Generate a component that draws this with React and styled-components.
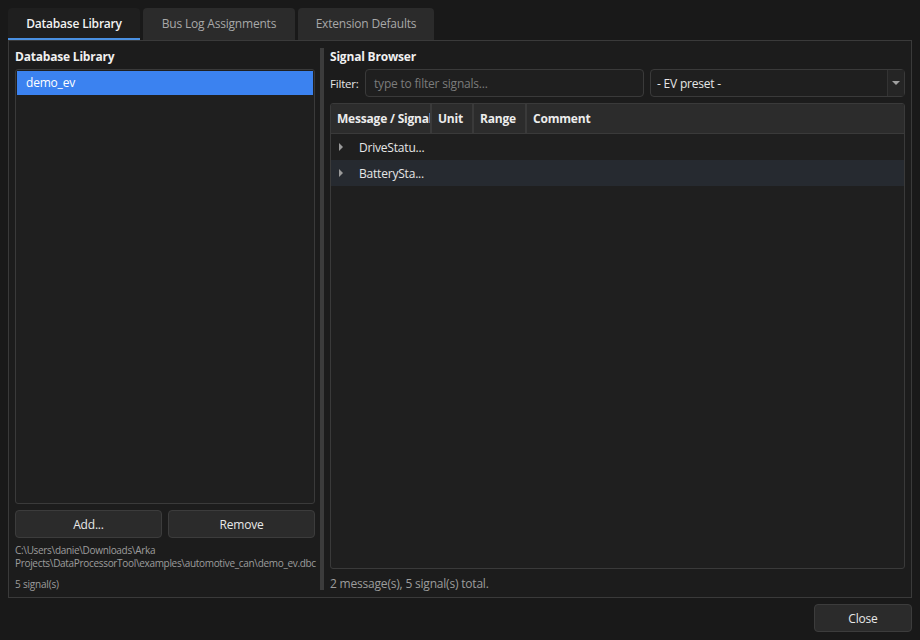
import React from 'react';
import styled, { createGlobalStyle } from 'styled-components';

const Global = createGlobalStyle`
  html, body { margin: 0; padding: 0; background: #191919; }
  body {
    font-family: "Open Sans", "Noto Sans", sans-serif;
    font-size: 12px;
    letter-spacing: -0.2px;
    color: #e6e6e6;
  }
`;

const Window = styled.div`
  width: 920px;
  height: 640px;
  box-sizing: border-box;
  padding: 8px;
  display: flex;
  flex-direction: column;
  background: #191919;
`;

const TabBar = styled.div`
  display: flex;
  gap: 3px;
  height: 32px;
`;

const Tab = styled.div`
  display: flex;
  align-items: center;
  justify-content: center;
  white-space: nowrap;
  border-radius: 4px 4px 0 0;
  background: ${p => (p.$active ? '#1f1f1f' : '#2b2b2b')};
  color: ${p => (p.$active ? '#f2f2f2' : '#a8a8a8')};
  font-weight: ${p => (p.$active ? 600 : 400)};
  border-bottom: 2px solid ${p => (p.$active ? '#4a90e2' : 'transparent')};
  box-sizing: border-box;
  width: ${p => p.$w}px;
`;

const Pane = styled.div`
  height: 558px;
  border: 1px solid #3a3a3a;
  background: #1c1c1c;
  box-sizing: border-box;
  display: flex;
  padding: 6px;
  gap: 5px;
`;

const LeftCol = styled.div`
  width: 300px;
  display: flex;
  flex-direction: column;
`;

const RightCol = styled.div`
  flex: 1;
  display: flex;
  flex-direction: column;
`;

const Splitter = styled.div`
  width: 4px;
  background: #3c3c3c;
  margin: 1px 1px 1px 0;
`;

const Title = styled.div`
  font-weight: 700;
  color: #f0f0f0;
  height: 22px;
  line-height: 20px;
`;

const List = styled.div`
  flex: 1;
  border: 1px solid #3a3a3a;
  border-radius: 3px;
  background: #1f1f1f;
  padding: 1px;
`;

const ListItem = styled.div`
  height: 24px;
  line-height: 24px;
  padding-left: 9px;
  background: ${p => (p.$selected ? '#3b82f0' : 'transparent')};
  color: #ffffff;
`;

const ButtonRow = styled.div`
  display: flex;
  gap: 6px;
  margin-top: 6px;
`;

const Button = styled.div`
  flex: ${p => (p.$w ? 'none' : 1)};
  width: ${p => (p.$w ? `${p.$w}px` : 'auto')};
  height: 28px;
  box-sizing: border-box;
  border: 1px solid #3c3c3c;
  border-radius: 4px;
  background: #2b2b2b;
  color: #e8e8e8;
  display: flex;
  align-items: center;
  justify-content: center;
`;

const PathText = styled.div`
  margin-top: 6px;
  font-size: 10px;
  line-height: 13px;
  color: #9c9c9c;
  white-space: nowrap;
  letter-spacing: -0.32px;
`;

const SmallNote = styled.div`
  margin-top: 7px;
  font-size: 10px;
  color: #9c9c9c;
  height: 14px;
`;

const FilterRow = styled.div`
  display: flex;
  align-items: center;
  gap: 6px;
  height: 28px;
`;

const Label = styled.span`
  color: #e6e6e6;
  font-size: 11.5px;
  width: 29px;
`;

const Input = styled.div`
  width: 279px;
  height: 28px;
  box-sizing: border-box;
  border: 1px solid #3a3a3a;
  border-radius: 4px;
  background: #1f1f1f;
  color: #7c7c7c;
  display: flex;
  align-items: center;
  padding-left: 8px;
`;

const Combo = styled.div`
  flex: 1;
  height: 28px;
  box-sizing: border-box;
  border: 1px solid #3a3a3a;
  border-radius: 4px;
  background: #1f1f1f;
  color: #e6e6e6;
  display: flex;
  align-items: center;
  padding-left: 6px;
  position: relative;
`;

const ComboArrow = styled.div`
  position: absolute;
  right: 0;
  top: 0;
  bottom: 0;
  width: 16px;
  background: #252525;
  border-left: 1px solid #333;
  display: flex;
  align-items: center;
  justify-content: center;
  &::after {
    content: '';
    border-left: 4px solid transparent;
    border-right: 4px solid transparent;
    border-top: 4px solid #a0a0a0;
  }
`;

const Table = styled.div`
  margin-top: 6px;
  height: 466px;
  box-sizing: border-box;
  border: 1px solid #3a3a3a;
  border-radius: 3px;
  background: #1f1f1f;
  overflow: hidden;
`;

const HeaderRow = styled.div`
  display: flex;
  height: 30px;
  background: #2c2c2c;
  border-bottom: 1px solid #3a3a3a;
  box-sizing: border-box;
`;

const HeadCell = styled.div`
  width: ${p => (p.$w ? `${p.$w}px` : 'auto')};
  flex: ${p => (p.$w ? 'none' : 1)};
  box-sizing: border-box;
  padding-left: 6px;
  display: flex;
  align-items: center;
  font-weight: 700;
  color: #ececec;
  border-right: ${p => (p.$w ? '2px solid #3a3a3a' : 'none')};
  overflow: hidden;
  white-space: nowrap;
`;

const Row = styled.div`
  display: flex;
  align-items: center;
  height: 26px;
  background: ${p => (p.$alt ? '#262a30' : 'transparent')};
  color: #e6e6e6;
`;

const Caret = styled.span`
  width: 0;
  height: 0;
  margin: 0 16px 0 8px;
  border-top: 4px solid transparent;
  border-bottom: 4px solid transparent;
  border-left: 4px solid #9a9a9a;
`;

const Footer = styled.div`
  margin-top: 8px;
  color: #9c9c9c;
  height: 14px;
  line-height: 14px;
`;

const BottomBar = styled.div`
  display: flex;
  justify-content: flex-end;
  margin-top: 6px;
`;

export default function App() {
  return (
    <Window>
      <Global />
      <TabBar>
        <Tab $active $w={132}>Database Library</Tab>
        <Tab $w={152}>Bus Log Assignments</Tab>
        <Tab $w={136}>Extension Defaults</Tab>
      </TabBar>
      <Pane>
        <LeftCol>
          <Title>Database Library</Title>
          <List>
            <ListItem $selected>demo_ev</ListItem>
          </List>
          <ButtonRow>
            <Button>Add...</Button>
            <Button>Remove</Button>
          </ButtonRow>
          <PathText>
            C:\Users\danie\Downloads\Arka
            <br />
            Projects\DataProcessorTool\examples\automotive_can\demo_ev.dbc
          </PathText>
          <SmallNote>5 signal(s)</SmallNote>
        </LeftCol>
        <Splitter />
        <RightCol>
          <Title>Signal Browser</Title>
          <FilterRow>
            <Label>Filter:</Label>
            <Input>type to filter signals...</Input>
            <Combo>
              - EV preset -
              <ComboArrow />
            </Combo>
          </FilterRow>
          <Table>
            <HeaderRow>
              <HeadCell $w={101}>Message / Signal</HeadCell>
              <HeadCell $w={42}>Unit</HeadCell>
              <HeadCell $w={53}>Range</HeadCell>
              <HeadCell>Comment</HeadCell>
            </HeaderRow>
            <Row>
              <Caret />
              DriveStatu...
            </Row>
            <Row $alt>
              <Caret />
              BatterySta...
            </Row>
          </Table>
          <Footer>2 message(s), 5 signal(s) total.</Footer>
        </RightCol>
      </Pane>
      <BottomBar>
        <Button $w={98}>Close</Button>
      </BottomBar>
    </Window>
  );
}
